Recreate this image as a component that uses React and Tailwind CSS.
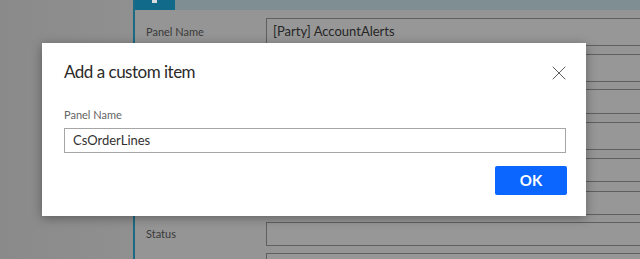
import React from 'react';
import { X } from 'lucide-react';

const font = { fontFamily: 'Lato, "Open Sans", Arial, sans-serif' };

// rows of the form that sits behind the dim overlay
const rows = [
    { label: 'Panel Name', value: '[Party] AccountAlerts', mt: 'mt-[8px]', h: 'h-[28px]' },
    { label: '', value: '', mt: 'mt-[8px]', h: 'h-[28px]' },
    { label: '', value: '', mt: 'mt-[7px]', h: 'h-[25px]' },
    { label: '', value: '', mt: 'mt-[8px]', h: 'h-[28px]' },
    { label: '', value: '', mt: 'mt-[8px]', h: 'h-[24px]' },
    { label: '', value: '', mt: 'mt-[9px]', h: 'h-[24px]' },
    { label: 'Status', value: '', mt: 'mt-[7px]', h: 'h-[24px]' },
    { label: '', value: '', mt: 'mt-[7px]', h: 'h-[24px]' },
];

const App = () => {
    return (
        <div className="relative w-[640px] h-[259px] overflow-hidden flex bg-[#8c8c8c]" style={font}>
            {/* Background page, dimmed */}
            <div className="w-[133px] shrink-0 bg-gradient-to-r from-[#8a8a8a] to-[#909090]" />
            <div className="flex-1 flex flex-col border-l-2 border-[#1d6a84] bg-[#959595]">
                <div className="h-[10px] flex shrink-0">
                    <div className="w-[40px] bg-[#126a8a] relative">
                        <div className="absolute left-[17px] top-0 w-[5px] h-[3px] bg-[#d9dde0]" />
                    </div>
                    <div className="flex-1 bg-[#7f8e93]" />
                </div>
                <div className="flex flex-col pl-[11px]">
                    {rows.map((row, i) => (
                        <div key={i} className={`flex items-center ${row.mt}`}>
                            <div className="w-[120px] text-[11px] text-[#3a3a3a]">{row.label}</div>
                            <div className={`flex-1 ${row.h} border border-[#5f5f5f] bg-[#979797] -mr-[10px] pl-[6px] flex items-center text-[13px] text-[#262626]`}>
                                {row.value}
                            </div>
                        </div>
                    ))}
                </div>
            </div>

            {/* Dialog */}
            <div className="absolute left-[42px] top-[43px] w-[544px] h-[173px] bg-white shadow-[0_2px_10px_rgba(0,0,0,0.35)] pl-[22px] pr-[20px]">
                <div className="flex items-start justify-between pt-[16px]">
                    <h2 className="text-[17px] leading-[26px] tracking-[-0.5px] text-[#2b2a29] font-normal">Add a custom item</h2>
                    <button className="mt-[2px] -mr-[5px] text-[#605e5c]">
                        <X className="w-[24px] h-[24px]" strokeWidth={1} />
                    </button>
                </div>
                <div className="mt-[22px] text-[11px] leading-[16px] text-[#646464]">Panel Name</div>
                <div className="mt-[5px] h-[25px] border border-[#a6a6a6] flex items-center pl-[8px] text-[13px] text-[#323130]">
                    CsOrderLines
                </div>
                <div className="flex justify-end mt-[13px]">
                    <button className="w-[72px] h-[29px] -mr-[1px] rounded-[2px] bg-[#0a66ff] text-white text-[15px] font-bold">
                        OK
                    </button>
                </div>
            </div>
        </div>
    );
};

export default App;
